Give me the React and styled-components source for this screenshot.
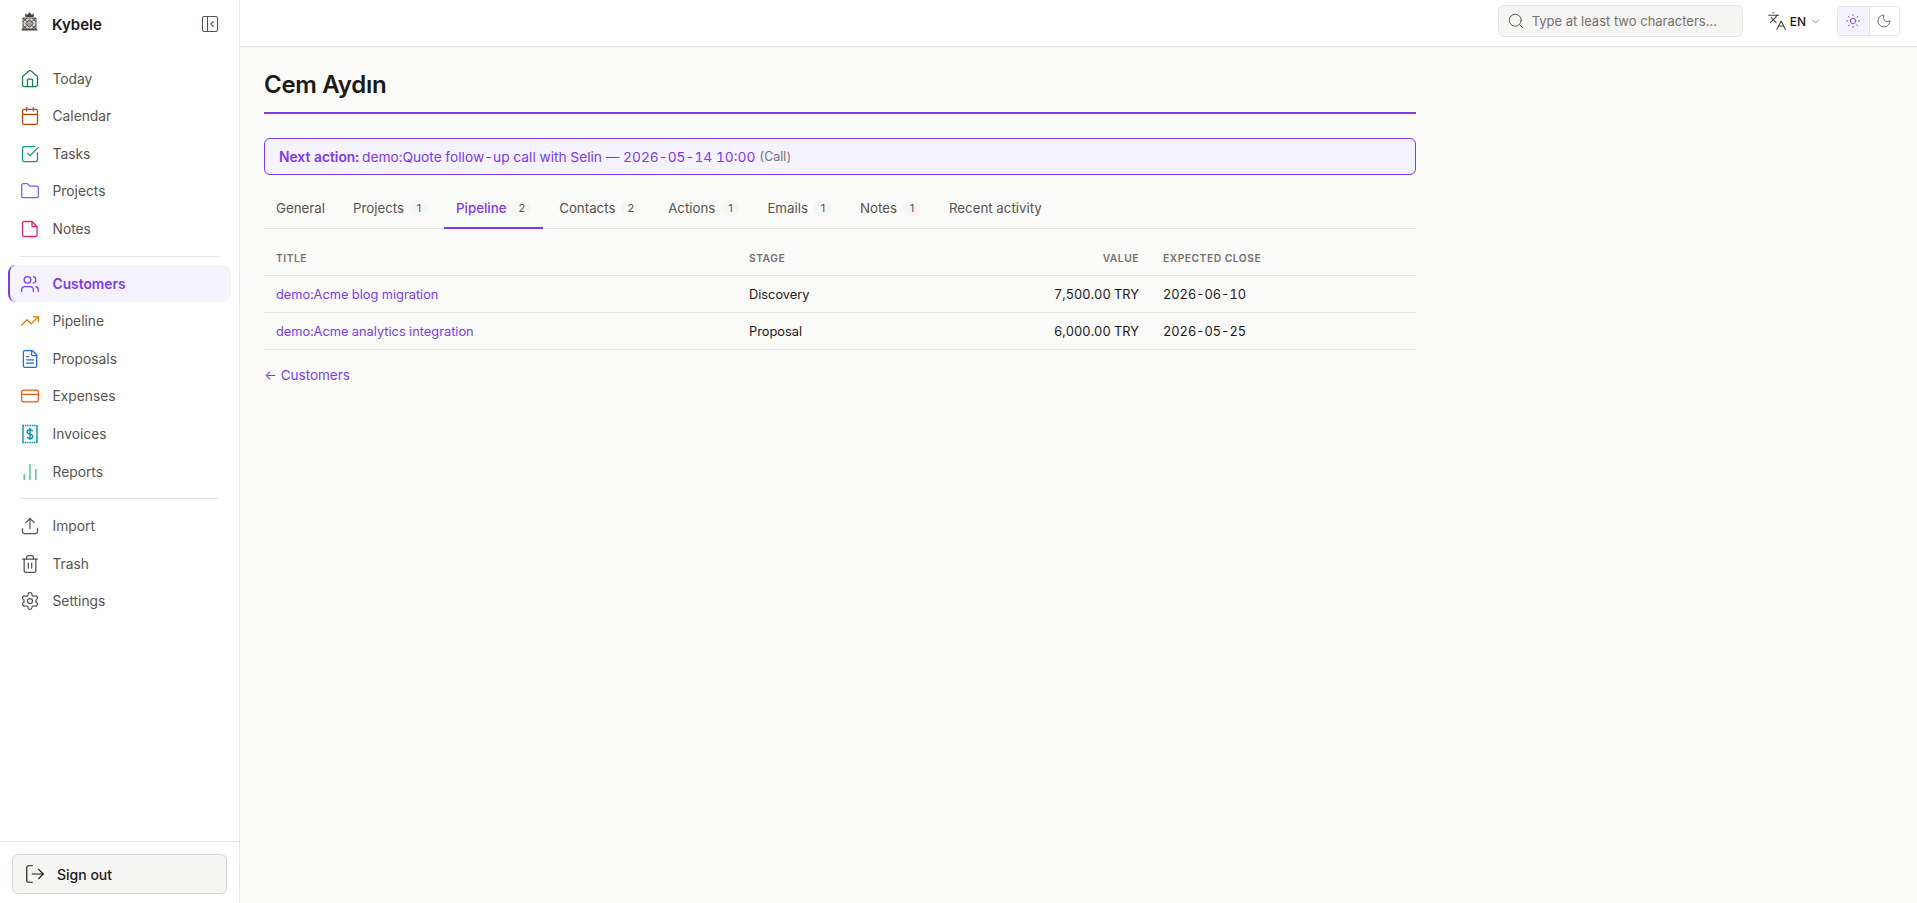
import React from "react";
import styled, { createGlobalStyle } from "styled-components";
import { House, Calendar, SquareCheckBig, Folder, Users, TrendingUp, FileText, CreditCard, ChartNoAxesColumn, Upload, Trash2, Settings, LogOut, Search, Languages, ChevronDown, Sun, Moon, PanelLeftClose } from "lucide-react";

const Global = createGlobalStyle`
  html, body { margin: 0; padding: 0; height: 100%; }
  body { font-family: Inter, "Noto Sans", sans-serif; background: #fafaf9; color: #1c1917; overflow: hidden; }
  #root { height: 100%; }
  * { box-sizing: border-box; }
`;

const Shell = styled.div`display: flex; height: 903px;`;
const Sidebar = styled.aside`
  width: 240px; flex: none; background: #fff; border-right: 1px solid #e7e5e4;
  display: flex; flex-direction: column;
`;
const Brand = styled.div`
  height: 48px; display: flex; align-items: center; padding: 0 21px; gap: 14px;
`;
const LogoMark = styled.svg`margin-top: -5px; flex: none;`;
const BrandName = styled.span`font-size: 15px; font-weight: 600; color: #1c1917; flex: 1;`;
const CollapseBtn = styled.span`display: flex; color: #57534e; margin-right: -2px;`;
const Nav = styled.nav`padding: 11.8px 8px 0; display: flex; flex-direction: column; flex: 1;`;
const NavItem = styled.a`
  height: 37.6px; flex: none; display: flex; align-items: center; gap: 13px; padding-left: 9.500px;
  font-size: 13.8px; border-radius: 8px;
  font-weight: ${p => (p.$active ? 600 : 400)};
  color: ${p => (p.$active ? "#7c3aed" : "#57534e")};
  background: ${p => (p.$active ? "#f5f3ff" : "transparent")};
  border-left: 2px solid ${p => (p.$active ? "#7c3aed" : "transparent")};
  & > svg { flex: none; color: ${p => p.$tint || "#57534e"}; }
`;
const NavDivider = styled.hr`border: 0; border-top: 1px solid #e7e5e4; margin: 8px 12px; width: 199px;`;
const SidebarFoot = styled.div`border-top: 1px solid #e7e5e4; padding: 12px 12px 9px;`;
const SignOut = styled.button`
  width: 215px; height: 40px; display: flex; align-items: center; gap: 11px; padding: 0 11px;
  background: #f5f5f4; border: 1px solid #d6d3d1; border-radius: 6px;
  font: 500 14px Inter, sans-serif; color: #1c1917;
`;
const Main = styled.div`flex: 1; display: flex; flex-direction: column; min-width: 0;`;
const TopBar = styled.header`
  height: 47px; background: #fff; border-bottom: 1px solid #e7e5e4; flex: none;
  display: flex; align-items: center; justify-content: flex-end; padding: 0 17px 4px 0;
`;
const SearchBox = styled.div`
  width: 245px; height: 32px; background: #f5f5f4; border: 1px solid #e7e5e4; border-radius: 6px;
  display: flex; align-items: center; gap: 7px; padding: 0 8px;
  font-size: 13px; color: #78716c; margin-right: 24px;
  svg { color: #57534e; flex: none; }
`;
const LangPicker = styled.div`
  display: flex; align-items: center; color: #1c1917; font-size: 12px; font-weight: 500; margin-right: 15px;
  svg:first-child { margin-right: 3px; color: #44403c; }
  svg:last-child { margin-left: 3px; color: #78716c; }
`;
const ThemeToggle = styled.div`display: flex; border: 1px solid #e7e5e4; border-radius: 4px; overflow: hidden; height: 30px;`;
const ThemeOption = styled.span`
  width: 30.5px; display: flex; align-items: center; justify-content: center;
  background: ${p => (p.$on ? "#f5f3ff" : "#fff")};
  color: ${p => (p.$on ? "#7c3aed" : "#57534e")};
  & + & { border-left: 1px solid #e7e5e4; }
`;
const Content = styled.main`padding: 23px 24px 24px; width: 1200px;`;
const Title = styled.h1`
  margin: 0; font-size: 24px; font-weight: 600; line-height: 30px; padding-bottom: 12px; height: 44px;
  color: #1c1917; letter-spacing: -0.3px;
  border-bottom: 2px solid #7c3aed;
`;
const NextAction = styled.div`
  margin-top: 24px; height: 37px; background: #f5f3ff; border: 1px solid #7c3aed; border-radius: 6px;
  display: flex; align-items: center; padding: 0 14px; font-size: 13.8px; color: #7c3aed; gap: 3px;
  font-variant-numeric: tabular-nums;
`;
const Strong = styled.strong`font-weight: 600;`;
const ActionText = styled.span`font-size: 13.75px;`;
const Muted = styled.span`color: #78716c; font-size: 12.5px; margin-left: 1px;`;
const Tabs = styled.div`margin-top: 15px; display: flex; border-bottom: 1px solid #e7e5e4; height: 39px;`;
const Tab = styled.a`
  height: 39px; padding: 0 12px 2px; display: flex; align-items: center; gap: 6px; font-size: 13.3px;
  font-weight: ${p => (p.$active ? 500 : 400)};
  color: ${p => (p.$active ? "#7c3aed" : "#57534e")};
  border-bottom: 2px solid ${p => (p.$active ? "#7c3aed" : "transparent")};
  margin-right: 4px;
`;
const Count = styled.span`
  background: #f5f5f4; color: #57534e; font-size: 11px; border-radius: 8px; padding: 1px 6px; font-weight: 400;
  min-width: 18px; text-align: center; line-height: 14px;
`;
const Table = styled.table`width: 100%; margin-top: 12px; border-collapse: collapse; table-layout: fixed; font-size: 12.8px;`;
const Th = styled.th`
  height: 34px; padding: 1px 12px 0; font-size: 10.3px; font-weight: 600; letter-spacing: 0.5px; color: #78716c;
  text-transform: uppercase; border-bottom: 1px solid #e7e5e4;
  text-align: ${p => (p.$right ? "right" : "left")}; width: ${p => p.$w}px;
`;
const Td = styled.td`
  height: 37px; padding: 1px 12px 0; border-bottom: 1px solid #e7e5e4; color: #1c1917;
  text-align: ${p => (p.$right ? "right" : "left")};
  font-variant-numeric: tabular-nums;
`;
const RowLink = styled.a`color: #7c3aed;`;
const BackLink = styled.a`display: block; margin-top: 17px; color: #7c3aed; font-size: 13.5px;`;

const KybeleLogo = () => (
  <LogoMark width="17" height="19" viewBox="0 0 17 19" fill="none" stroke="#44403c" strokeWidth="0.9">
    <path d="M4.4 5 L4 1.400 L6.300 2.800 L8.500 0.300 L10.700 2.800 L13 1.400 L12.600 5 Z" fill="#44403c" stroke="none" />
    <path d="M2 6 H15 V17 H2 Z" fill="#d6d3d1" />
    <path d="M2 6 L15 17 M15 6 L2 17 M2 9.700 L6 6 M11 6 L15 9.700 M2 13.300 L6 17 M11 17 L15 13.300" />
    <path d="M8.500 7.700 L12.300 11.500 L8.500 15.300 L4.700 11.500 Z" fill="#a8a29e" />
    <path d="M0.600 17.800 H16.400" strokeWidth="1.4" />
  </LogoMark>
);
const InvoiceIcon = () => (
  <svg width="20" height="20" viewBox="0 0 20 20" fill="none" stroke="#0891b2" strokeWidth="1.4" strokeLinecap="butt">
    <path d="M3 1.500v17M17 1.500v17" />
    <path d="M2.500 1.500h15M2.500 18.500h15" strokeDasharray="1.500 0.800" />
    <path d="M12.800 7.200c-.5-1-1.500-1.500-2.800-1.500-1.600 0-2.800.9-2.800 2.200 0 2.900 5.600 1.600 5.600 4.400 0 1.300-1.200 2.200-2.800 2.200-1.300 0-2.300-.5-2.800-1.500M10 4v12" />
  </svg>
);
const NoteIcon = () => (
  <svg width="20" height="20" viewBox="0 0 20 20" fill="none" stroke="#db2777" strokeWidth="1.3" strokeLinejoin="round">
    <path d="M4 2.500h8l5 5v8.500a1.500 1.500 0 0 1-1.500 1.500H4A1.500 1.500 0 0 1 2.500 16V4A1.500 1.500 0 0 1 4 2.500z" />
    <path d="M12 2.500v5h5" />
  </svg>
);

const items = [
  ["Today", House, "#15803d"], ["Calendar", Calendar, "#c2410c"], ["Tasks", SquareCheckBig, "#0d9488"],
  ["Projects", Folder, "#6366f1"], ["Notes", NoteIcon, null],
];
const items2 = [
  ["Customers", Users, "#7c3aed", true], ["Pipeline", TrendingUp, "#d97706"], ["Proposals", FileText, "#2563eb"],
  ["Expenses", CreditCard, "#ea580c"], ["Invoices", InvoiceIcon, null], ["Reports", ChartNoAxesColumn, "#34b38a"],
];
const items3 = [["Import", Upload, "#57534e"], ["Trash", Trash2, "#57534e"], ["Settings", Settings, "#57534e"]];

const NavGroup = ({ list }) => list.map(([label, Icon, tint, active]) => (
  <NavItem key={label} $tint={tint} $active={active}>
    <Icon size={20} strokeWidth={1.5} />
    {label}
  </NavItem>
));

const tabs = [["General"], ["Projects", 1], ["Pipeline", 2, true], ["Contacts", 2], ["Actions", 1], ["Emails", 1], ["Notes", 1], ["Recent activity"]];

export default function App() {
  return (
    <>
      <Global />
      <Shell>
        <Sidebar>
          <Brand>
            <KybeleLogo />
            <BrandName>Kybele</BrandName>
            <CollapseBtn><PanelLeftClose size={20} strokeWidth={1.3} /></CollapseBtn>
          </Brand>
          <Nav>
            <NavGroup list={items} />
            <NavDivider />
            <NavGroup list={items2} />
            <NavDivider />
            <NavGroup list={items3} />
          </Nav>
          <SidebarFoot>
            <SignOut><LogOut size={22} strokeWidth={1.3} />Sign out</SignOut>
          </SidebarFoot>
        </Sidebar>
        <Main>
          <TopBar>
            <SearchBox><Search size={18} strokeWidth={1.3} />Type at least two characters...</SearchBox>
            <LangPicker><Languages size={20} strokeWidth={1.3} />EN<ChevronDown size={13} strokeWidth={1.3} /></LangPicker>
            <ThemeToggle>
              <ThemeOption $on><Sun size={16} strokeWidth={1.3} /></ThemeOption>
              <ThemeOption><Moon size={16} strokeWidth={1.3} /></ThemeOption>
            </ThemeToggle>
          </TopBar>
          <Content>
            <Title>Cem Aydın</Title>
            <NextAction>
              <Strong>Next action:</Strong>
              <ActionText>demo:Quote follow-up call with Selin — 2026-05-14 10:00</ActionText>
              <Muted>(Call)</Muted>
            </NextAction>
            <Tabs>
              {tabs.map(([label, n, active]) => (
                <Tab key={label} $active={active}>{label}{n && <Count>{n}</Count>}</Tab>
              ))}
            </Tabs>
            <Table>
              <thead>
                <tr>
                  <Th $w={473}>Title</Th>
                  <Th $w={193}>Stage</Th>
                  <Th $w={221} $right>Value</Th>
                  <Th>Expected close</Th>
                </tr>
              </thead>
              <tbody>
                <tr>
                  <Td><RowLink>demo:Acme blog migration</RowLink></Td>
                  <Td>Discovery</Td>
                  <Td $right>7,500.00 TRY</Td>
                  <Td>2026-06-10</Td>
                </tr>
                <tr>
                  <Td><RowLink>demo:Acme analytics integration</RowLink></Td>
                  <Td>Proposal</Td>
                  <Td $right>6,000.00 TRY</Td>
                  <Td>2026-05-25</Td>
                </tr>
              </tbody>
            </Table>
            <BackLink>← Customers</BackLink>
          </Content>
        </Main>
      </Shell>
    </>
  );
}
